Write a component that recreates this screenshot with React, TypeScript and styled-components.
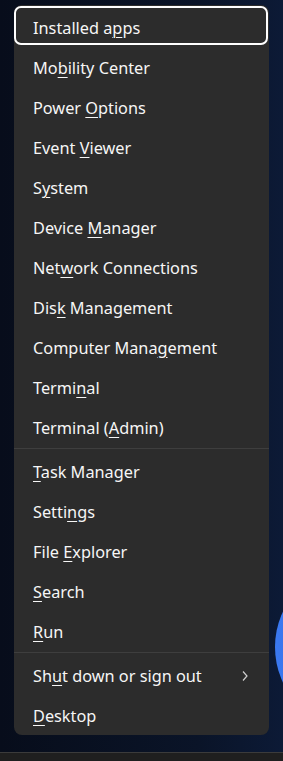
import styled, { createGlobalStyle } from "styled-components";

type Entry = { label: string; key: number; submenu?: boolean; focused?: boolean };

const groups: Entry[][] = [
  [
    { label: "Installed apps", key: 11, focused: true },
    { label: "Mobility Center", key: 2 },
    { label: "Power Options", key: 6 },
    { label: "Event Viewer", key: 6 },
    { label: "System", key: 1 },
    { label: "Device Manager", key: 7 },
    { label: "Network Connections", key: 3 },
    { label: "Disk Management", key: 3 },
    { label: "Computer Management", key: 13 },
    { label: "Terminal", key: 5 },
    { label: "Terminal (Admin)", key: 10 },
  ],
  [
    { label: "Task Manager", key: 0 },
    { label: "Settings", key: 5 },
    { label: "File Explorer", key: 5 },
    { label: "Search", key: 0 },
    { label: "Run", key: 0 },
  ],
  [
    { label: "Shut down or sign out", key: 2, submenu: true },
    { label: "Desktop", key: 0 },
  ],
];

const GlobalStyle = createGlobalStyle`
  html, body {
    margin: 0;
    padding: 0;
  }
  body {
    width: 283px;
    height: 761px;
    overflow: hidden;
    background: #0a1222;
    font-family: "Noto Sans", "Open Sans", sans-serif;
  }
`;

const Screen = styled.div`
  position: relative;
  height: 761px;
  display: flex;
  flex-direction: column;
  background: linear-gradient(90deg, #070d1b 0%, #0a1428 70%, #0c1a36 100%);
  overflow: hidden;
`;

const Desktop = styled.div`
  flex: 1;
  padding: 5px 0 0 14px;
`;

const Bloom = styled.div`
  position: absolute;
  left: 275px;
  top: 564px;
  width: 166px;
  height: 166px;
  border-radius: 50%;
  background: radial-gradient(circle at 50% 50%, #2a64d8 0%, #3a78f0 70%, #4d8bff 100%);
`;

const Taskbar = styled.div`
  height: 8px;
  border-top: 1px solid #3b3b3b;
  background: #1f1f1f;
`;

const Menu = styled.div`
  width: 255px;
  padding-bottom: 2px;
  background: #2c2c2c;
  border-radius: 8px;
  display: flex;
  flex-direction: column;
`;

const Separator = styled.div`
  height: 1px;
  margin: 3px 0 0;
  background: #3e3e3e;
`;

const Item = styled.div<{ $focused?: boolean }>`
  position: relative;
  height: 40px;
  padding: 5px 20px 0 19px;
  box-sizing: border-box;
  display: flex;
  align-items: center;
  justify-content: space-between;
  color: #f6f6f6;
  font-size: 16.3px;

  &::after {
    content: "";
    display: ${(p) => (p.$focused ? "block" : "none")};
    position: absolute;
    left: 0;
    right: 1px;
    top: 1px;
    bottom: 0;
    border: 2px solid #ffffff;
    border-radius: 7px;
  }

  u {
    text-decoration-thickness: 1px;
    text-underline-offset: 3px;
  }
`;

const Chevron = () => (
  <svg width="8" height="12" viewBox="0 0 8 12">
    <polyline points="2,1.5 6,6 2,10.5" fill="none" stroke="#d0d0d0" strokeWidth="1.2" />
  </svg>
);

const Label = ({ text, k }: { text: string; k: number }) => (
  <span>
    {text.slice(0, k)}
    <u>{text[k]}</u>
    {text.slice(k + 1)}
  </span>
);

export default function App() {
  return (
    <Screen>
      <GlobalStyle />
      <Bloom />
      <Desktop>
        <Menu>
          {groups.map((group, gi) => (
            <div key={gi}>
              {gi > 0 && <Separator />}
              {group.map((e) => (
                <Item key={e.label} $focused={e.focused}>
                  <Label text={e.label} k={e.key} />
                  {e.submenu && <Chevron />}
                </Item>
              ))}
            </div>
          ))}
        </Menu>
      </Desktop>
      <Taskbar />
    </Screen>
  );
}
